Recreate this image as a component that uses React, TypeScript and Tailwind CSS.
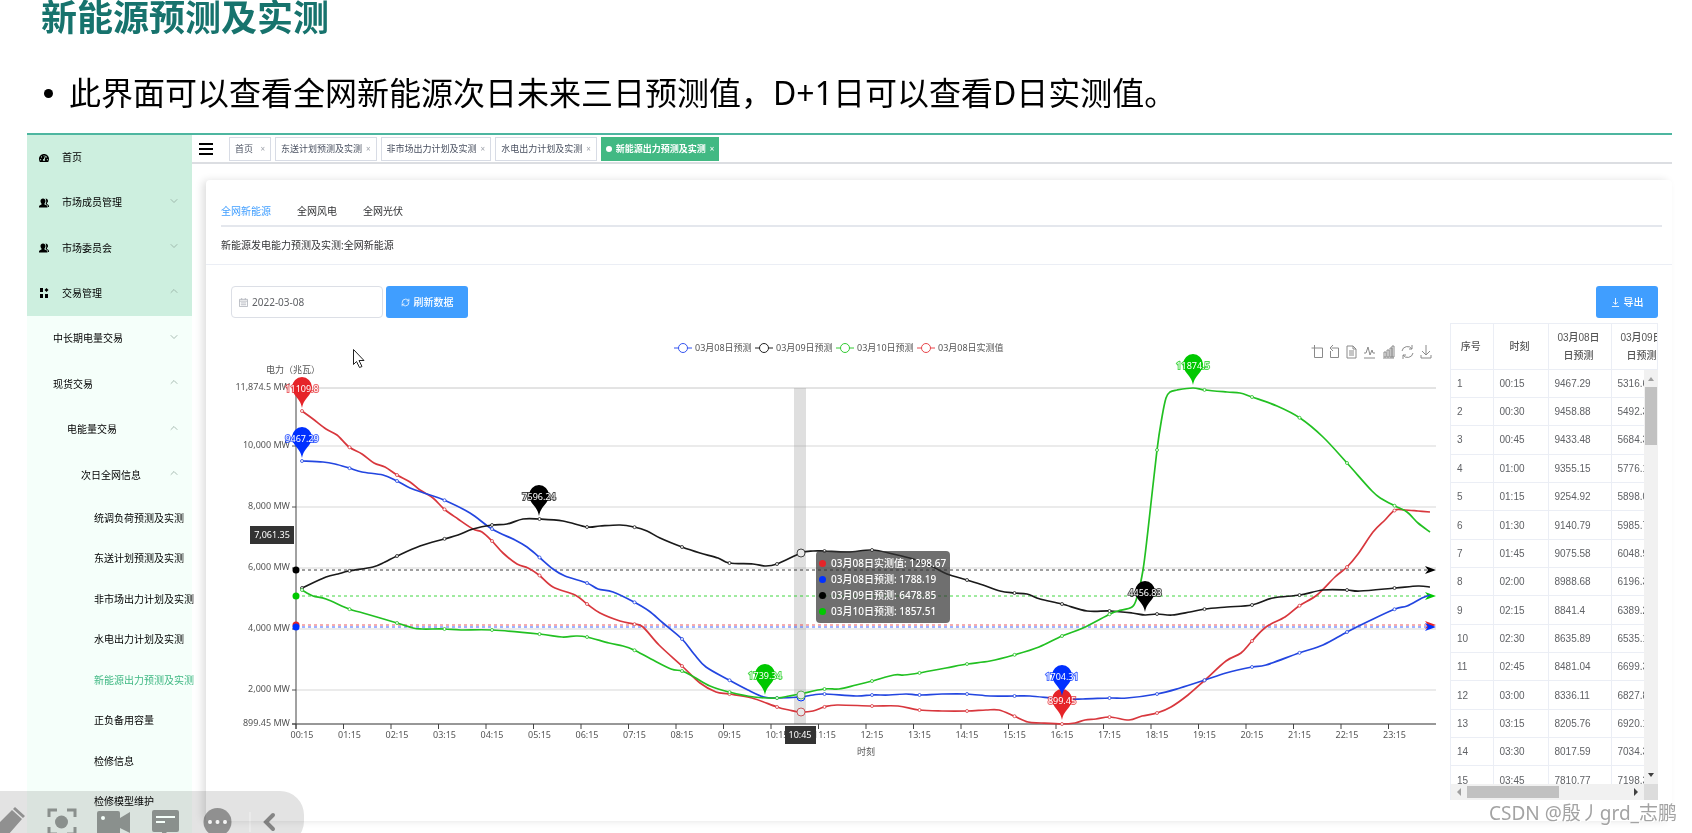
import { useState } from "react";
import { ChevronDown, ChevronUp, RefreshCw } from "lucide-react";
import { FaTachometerAlt } from "react-icons/fa";

type Point = [number, number];
type Series = { name: string; color: string; line: string; points: Point[] };
type Pin = { x: number; y: number; color: string; label: string };

const BLUE = "#0030ff";
const BLACK = "#000000";
const GREEN = "#00c800";
const RED = "#e62429";

const menuGroups = [
  { label: "首页", icon: "home", arrow: "" },
  { label: "市场成员管理", icon: "users", arrow: "down" },
  { label: "市场委员会", icon: "users", arrow: "down" },
  { label: "交易管理", icon: "grid", arrow: "up" },
];

const subGroups = [
  { label: "中长期电量交易", arrow: "down", pad: "pl-[26px]" },
  { label: "现货交易", arrow: "up", pad: "pl-[26px]" },
  { label: "电能量交易", arrow: "up", pad: "pl-10" },
  { label: "次日全网信息", arrow: "up", pad: "pl-[54px]" },
];

const leaves = [
  "统调负荷预测及实测",
  "东送计划预测及实测",
  "非市场出力计划及实测",
  "水电出力计划及实测",
  "新能源出力预测及实测",
  "正负备用容量",
  "检修信息",
  "检修模型维护",
];

const openTabs = ["首页", "东送计划预测及实测", "非市场出力计划及实测", "水电出力计划及实测"];

const rows = [
  ["00:15", "9467.29", "5316.63"],
  ["00:30", "9458.88", "5492.35"],
  ["00:45", "9433.48", "5684.32"],
  ["01:00", "9355.15", "5776.14"],
  ["01:15", "9254.92", "5898.05"],
  ["01:30", "9140.79", "5985.72"],
  ["01:45", "9075.58", "6048.93"],
  ["02:00", "8988.68", "6196.37"],
  ["02:15", "8841.4", "6389.24"],
  ["02:30", "8635.89", "6535.12"],
  ["02:45", "8481.04", "6699.31"],
  ["03:00", "8336.11", "6827.85"],
  ["03:15", "8205.76", "6920.16"],
  ["03:30", "8017.59", "7034.38"],
  ["03:45", "7810.77", "7198.33"],
];

// curve points in chart units, x 296-1436 and y 388-724
const series: Series[] = [
  {
    name: "03月08日实测值",
    color: RED,
    line: "#d8373d",
    points: [
      [302, 411], [313, 419], [326, 429], [337, 435], [349, 447], [362, 454], [374, 463], [385, 467],
      [397, 475], [410, 482], [420, 490], [433, 498], [444, 509], [458, 519], [473, 529], [482, 532],
      [492, 541], [503, 553], [517, 564], [528, 568], [539, 575], [553, 587], [575, 595], [587, 604],
      [600, 613], [620, 621], [634, 624], [643, 627], [659, 645], [682, 666], [700, 683], [716, 692],
      [729, 694], [752, 698], [777, 707], [789, 710], [800, 712], [813, 711], [824, 707], [837, 705],
      [872, 706], [898, 706], [919, 710], [942, 711], [967, 711], [986, 710], [999, 710], [1014, 716],
      [1028, 722], [1041, 723], [1062, 724], [1075, 723], [1085, 720], [1096, 719], [1110, 717],
      [1129, 720], [1142, 716], [1157, 713], [1171, 707], [1188, 695], [1205, 680], [1226, 661],
      [1241, 653], [1252, 641], [1266, 627], [1285, 617], [1299, 606], [1317, 595], [1335, 577],
      [1347, 567], [1358, 554], [1373, 532], [1385, 520], [1395, 510], [1405, 510], [1418, 511], [1430, 512],
    ],
  },
  {
    name: "03月08日预测",
    color: BLUE,
    line: "#2346e0",
    points: [
      [302, 461], [323, 462], [335, 464], [349, 468], [362, 472], [383, 475], [397, 481], [410, 488],
      [427, 494], [444, 500], [470, 513], [492, 529], [515, 540], [527, 547], [539, 557], [553, 569],
      [565, 576], [587, 583], [598, 589], [613, 592], [634, 602], [649, 611], [663, 623], [682, 639],
      [694, 654], [706, 667], [729, 680], [748, 690], [764, 697], [777, 698], [800, 697], [813, 695],
      [824, 694], [856, 696], [872, 695], [889, 695], [906, 694], [919, 695], [942, 694], [967, 694],
      [990, 696], [1014, 696], [1030, 696], [1062, 699], [1083, 699], [1110, 698], [1127, 698],
      [1157, 694], [1180, 688], [1205, 680], [1226, 673], [1252, 667], [1266, 665], [1299, 653],
      [1323, 645], [1347, 632], [1369, 621], [1395, 609], [1407, 606], [1422, 598], [1430, 595],
    ],
  },
  {
    name: "03月09日预测",
    color: BLACK,
    line: "#1a1a1a",
    points: [
      [302, 588], [326, 577], [338, 574], [349, 571], [373, 567], [385, 562], [397, 556], [420, 546],
      [444, 539], [458, 535], [473, 529], [492, 525], [507, 524], [523, 519], [539, 519], [563, 521],
      [587, 527], [600, 526], [620, 525], [634, 527], [647, 531], [660, 538], [682, 547], [700, 553],
      [718, 558], [729, 563], [753, 564], [765, 566], [777, 564], [801, 553], [813, 551], [824, 551],
      [848, 552], [872, 550], [893, 554], [913, 559], [933, 567], [947, 574], [967, 580], [983, 585],
      [1000, 591], [1014, 593], [1027, 594], [1040, 599], [1062, 604], [1087, 611], [1110, 611],
      [1132, 613], [1145, 615], [1157, 614], [1172, 615], [1190, 612], [1205, 609], [1227, 607],
      [1252, 605], [1273, 598], [1300, 595], [1323, 590], [1347, 590], [1360, 591], [1395, 588],
      [1418, 586], [1430, 587],
    ],
  },
  {
    name: "03月10日预测",
    color: GREEN,
    line: "#22c022",
    points: [
      [302, 590], [313, 596], [326, 599], [349, 609], [363, 613], [397, 623], [413, 628], [422, 629],
      [444, 629], [461, 630], [492, 630], [539, 634], [562, 637], [576, 636], [587, 637], [609, 643],
      [623, 646], [634, 650], [651, 659], [671, 669], [682, 671], [694, 677], [710, 686], [729, 692],
      [754, 697], [777, 698], [789, 696], [800, 694], [824, 689], [839, 689], [856, 685], [872, 681],
      [894, 675], [904, 675], [919, 673], [946, 668], [967, 664], [990, 661], [1014, 655], [1039, 647],
      [1062, 636], [1083, 628], [1110, 614], [1118, 611], [1132, 607], [1137, 597], [1143, 570],
      [1148, 530], [1157, 450], [1162, 417], [1166, 398], [1170, 392], [1177, 390], [1193, 388],
      [1205, 390], [1227, 392], [1240, 393], [1252, 397], [1277, 406], [1300, 418], [1323, 437],
      [1347, 463], [1372, 491], [1382, 499], [1395, 506], [1407, 512], [1418, 523], [1430, 532],
    ],
  },
];

const pins: Pin[] = [
  { x: 302, y: 408, color: RED, label: "11109.8" },
  { x: 302, y: 458, color: BLUE, label: "9467.29" },
  { x: 539, y: 516, color: BLACK, label: "7596.24" },
  { x: 1145, y: 612, color: BLACK, label: "4456.83" },
  { x: 765, y: 695, color: GREEN, label: "1739.34" },
  { x: 1193, y: 385, color: GREEN, label: "11874.5" },
  { x: 1062, y: 720, color: RED, label: "899.45" },
  { x: 1062, y: 696, color: BLUE, label: "1704.31" },
];

const yTicks = [
  { y: 388, label: "11,874.5 MW" },
  { y: 446, label: "10,000 MW" },
  { y: 507, label: "8,000 MW" },
  { y: 568, label: "6,000 MW" },
  { y: 629, label: "4,000 MW" },
  { y: 690, label: "2,000 MW" },
  { y: 724, label: "899.45 MW" },
];

const averages = [
  { y: 570, color: BLACK },
  { y: 596, color: GREEN },
  { y: 625, color: RED },
  { y: 627, color: BLUE },
];

const legend = [
  { x: 683, color: "#3555f0", label: "03月08日预测" },
  { x: 764, color: "#222222", label: "03月09日预测" },
  { x: 845, color: "#33cc33", label: "03月10日预测" },
  { x: 926, color: "#e8474c", label: "03月08日实测值" },
];

const tooltip = [
  { color: "bg-[#e62429]", text: "03月08日实测值: 1298.67" },
  { color: "bg-[#0030ff]", text: "03月08日预测: 1788.19" },
  { color: "bg-black", text: "03月09日预测: 6478.85" },
  { color: "bg-[#00c800]", text: "03月10日预测: 1857.51" },
];

const hours = Array.from({ length: 24 }, (_, i) => i);
const hourX = (h: number) => 302 + h * 47.5;

// Catmull-Rom through the points, written as bezier segments
const smooth = (p: Point[]) => {
  let d = `M${p[0][0]} ${p[0][1]}`;
  for (let i = 0; i < p.length - 1; i++) {
    const a = p[i - 1] || p[i];
    const b = p[i];
    const c = p[i + 1];
    const e = p[i + 2] || c;
    d += `C${b[0] + (c[0] - a[0]) / 6} ${b[1] + (c[1] - a[1]) / 6} ${c[0] - (e[0] - b[0]) / 6} ${
      c[1] - (e[1] - b[1]) / 6
    } ${c[0]} ${c[1]}`;
  }
  return d;
};

const valueAt = (p: Point[], x: number) => {
  const i = Math.max(1, p.findIndex((q) => q[0] >= x));
  const [x0, y0] = p[i - 1];
  const [x1, y1] = p[i];
  return y0 + ((y1 - y0) * (x - x0)) / (x1 - x0);
};

const MenuIcon = ({ name }: { name: string }) => {
  if (name === "home") return <FaTachometerAlt className="size-[10px]" />;
  if (name === "users")
    return (
      <svg viewBox="0 0 20 20" className="size-[10px]" fill="currentColor">
        <path d="M8 1c3 0 5 2 5 5 0 2-1 4-2 5v2l5 2c1 1 1 2 1 4H0c0-2 0-3 1-4l4-2v-2C4 10 3 8 3 6c0-3 2-5 5-5z" />
        <path d="M13 1c3 0 5 2 5 5 0 2-1 3-2 4v2l3 2c1 1 1 2 1 4h-2c0-3-1-4-5-6 2-2 2-8 0-11z" />
      </svg>
    );
  return (
    <svg viewBox="0 0 10 10" className="size-[10px]" fill="currentColor">
      <path d="M1 0h3v4H1zM7.500 0l2 2-2 2-2-2zM1 6h3v4H1zM6 6h3v4H6z" />
    </svg>
  );
};

const Arrow = ({ dir }: { dir: string }) => {
  if (!dir) return null;
  const Icon = dir === "up" ? ChevronUp : ChevronDown;
  return <Icon className="ml-auto mr-3 mb-1 size-3 text-[#8fa79b]" strokeWidth={1.5} />;
};

const Sidebar = () => (
  <nav className="w-[165px] shrink-0 bg-[#f5fffa] text-[10px] whitespace-nowrap text-black">
    <ul className="flex h-[181px] flex-col bg-[#cdefdf]">
      {menuGroups.map((item) => (
        <li key={item.label} className="flex flex-1">
          <button className="flex flex-1 items-center pl-3">
            <MenuIcon name={item.icon} />
            <span className="ml-[13px]">{item.label}</span>
            <Arrow dir={item.arrow} />
          </button>
        </li>
      ))}
    </ul>
    <ul className="flex h-[182px] flex-col">
      {subGroups.map((item) => (
        <li key={item.label} className="flex flex-1">
          <button className={`flex flex-1 items-center ${item.pad}`}>
            <span>{item.label}</span>
            <Arrow dir={item.arrow} />
          </button>
        </li>
      ))}
    </ul>
    <ul className="flex h-[324px] flex-col">
      {leaves.map((label) => (
        <li key={label} className="flex flex-1">
          <a
            href="#"
            className={`flex flex-1 items-center pl-[67px] ${
              label === "新能源出力预测及实测" ? "text-[#3fb883]" : ""
            }`}
          >
            {label}
          </a>
        </li>
      ))}
    </ul>
  </nav>
);

const TabsBar = () => (
  <div className="flex h-[29px] items-center gap-1 border-b-2 border-[#dcdee2] pl-[7px] text-[9px] whitespace-nowrap text-[#495060]">
    <button aria-label="菜单" className="mr-3 flex w-[14px] flex-col gap-[3px] py-1">
      <span className="h-[2px] bg-black" />
      <span className="h-[2px] bg-black" />
      <span className="h-[2px] bg-black" />
    </button>
    {openTabs.map((label) => (
      <button
        key={label}
        className="flex h-6 min-w-[42px] items-center justify-between gap-1 border border-[#d8dce5] bg-white px-[5px]"
      >
        {label}
        <span className="text-[8px] text-[#a0a4ac]">×</span>
      </button>
    ))}
    <button className="flex h-6 items-center gap-1 bg-[#42b983] px-[5px] font-bold text-white">
      <span className="size-[6px] rounded-full bg-white" />
      新能源出力预测及实测
      <span className="text-[8px] font-normal">×</span>
    </button>
  </div>
);

const Toolbox = () => (
  <g fill="none" stroke="#8a8a8a">
    <path d="M1314.500 345v12.500h8v-9.500h-11" />
    <path d="M1330.500 351v6.500h8v-9.500h-7M1333 345l-3 3 3 3" />
    <path d="M1347 346h6l3 3v9h-9zM1353 346v3h3M1349 351h5M1349 353h5M1349 355h5" />
    <path d="M1364 353h2l2-6 2 8 2-5 1 3h2M1364 358h11" />
    <path d="M1384 352h2v5h-2zM1387 350h2v7h-2zM1390 348h2v9h-2zM1392 346h2v11h-2zM1383 358h11" />
    <path d="M1402 351a5.500 5.500 0 0 1 10-2M1413 353a5.500 5.500 0 0 1-10 2M1412 345v4h-3M1403 359v-4h3" />
    <path d="M1426 345v9M1422 351l4 4 4-4M1421 355v3h10v-3" />
  </g>
);

const Chart = () => (
  <svg
    viewBox="206 318 1244 462"
    className="block h-auto w-full text-[9px]"
    fill="#555"
    role="img"
    aria-label="新能源预测及实测曲线"
  >
    {legend.map((item) => (
      <g key={item.label}>
        <path d={`M${item.x - 9} 348h18`} stroke={item.color} />
        <circle cx={item.x} cy={348} r={4.5} fill="#fff" stroke={item.color} />
        <text x={item.x + 12} y={351}>{item.label}</text>
      </g>
    ))}
    <Toolbox />

    <text x={293} y={373} textAnchor="middle">电力（兆瓦）</text>
    {yTicks.map((tick) => (
      <g key={tick.label}>
        <path
          d={`M296 ${tick.y}H1436`}
          stroke={tick.y === 388 ? "#c8c8c8" : "#ebebeb"}
          strokeWidth={tick.y === 388 ? 1 : 2}
        />
        <path d={`M292 ${tick.y}h4`} stroke="#555" />
        <text x={290} y={tick.y + 2} textAnchor="end">{tick.label}</text>
      </g>
    ))}
    <rect x={794} y={388} width={12} height={336} fill="#969696" opacity={0.3} />
    <path d="M296 388V729M292 724H1436" stroke="#444" fill="none" />
    {hours.map((h) => (
      <g key={h}>
        <path d={`M${296 + h * 47.5} 724v5`} stroke="#444" />
        <text x={hourX(h)} y={738} textAnchor="middle">
          {String(h).padStart(2, "0")}:15
        </text>
      </g>
    ))}
    <text x={866} y={755} textAnchor="middle">时刻</text>

    {averages.map((avg) => (
      <g key={avg.color} fill={avg.color}>
        <path d={`M296 ${avg.y}H1428`} stroke={avg.color} strokeDasharray="3 3" opacity={0.75} />
        <circle cx={296} cy={avg.y} r={3.5} />
        <path d={`M1436 ${avg.y}l-11-4 3 4-3 4z`} />
      </g>
    ))}

    {series.map((s) => (
      <g key={s.name} stroke={s.line}>
        <path d={smooth(s.points)} fill="none" strokeWidth={1.7} />
        {hours.map((h) => (
          <circle key={h} cx={hourX(h)} cy={valueAt(s.points, hourX(h))} r={1.5} fill="#fff" strokeWidth={0.8} />
        ))}
      </g>
    ))}
    <g fill="#e8e8e8">
      <circle cx={801} cy={553} r={4} stroke="#444" />
      <circle cx={801} cy={697} r={4} stroke={BLUE} />
      <circle cx={801} cy={695} r={4} stroke="#5cae5c" />
      <circle cx={801} cy={712} r={4} stroke="#c8555a" />
    </g>

    {pins.map((pin) => (
      <g key={pin.label} fill={pin.color}>
        <path
          d={`M${pin.x} ${pin.y}c-1-6-4-9-7.500-13.500a10 10.500 0 1 1 15 0c-3.500 4.500-6.500 7.500-7.500 13.500z`}
        />
        <text
          x={pin.x}
          y={pin.y - 16}
          textAnchor="middle"
          fill="#fff"
          stroke={pin.color}
          strokeWidth={2}
          strokeOpacity={0.7}
          paintOrder="stroke"
        >
          {pin.label}
        </text>
      </g>
    ))}

    <g fill="#fff">
      <rect x={250} y={526} width={44} height={18} fill="#333" />
      <text x={272} y={538} textAnchor="middle">7,061.35</text>
      <rect x={785} y={726} width={31} height={18} fill="#333" />
      <text x={800} y={738} textAnchor="middle">10:45</text>
    </g>

    <path d="M353.500 349.500v15l3-3 3 6 2.500-1-3-6h5z" fill="#fff" stroke="#222" />
  </svg>
);

const columns = (
  <colgroup>
    <col className="w-[42px]" />
    <col className="w-[55px]" />
    <col className="w-[63px]" />
    <col className="w-[63px]" />
  </colgroup>
);

const DataTable = () => (
  <div className="mt-[5px] w-[208px] shrink-0 border-t border-l border-[#ebeef5] font-['Liberation_Sans','Noto_Sans_CJK_SC',sans-serif] text-[10px] text-[#606266]">
    <div className="overflow-hidden border-r border-[#ebeef5]">
      <table className="h-[46px] w-[223px] table-fixed border-collapse text-[#555]">
        {columns}
        <thead>
          <tr className="leading-[18px]">
            {["序号", "时刻", "03月08日 日预测", "03月09日 日预测"].map((label) => (
              <th key={label} className="border-r border-b border-[#ebeef5] pr-[10px] pl-2 font-medium">
                {label}
              </th>
            ))}
          </tr>
        </thead>
      </table>
    </div>
    <div className="flex">
      <div className="h-[414px] flex-1 overflow-hidden">
        <table className="h-[425px] w-[223px] table-fixed border-collapse">
          {columns}
          <tbody>
            {rows.map((row, i) => (
              <tr key={row[0]}>
                <td className="border-r border-b border-[#ebeef5] pl-[6px]">{i + 1}</td>
                {row.map((cell) => (
                  <td key={cell} className="border-r border-b border-[#ebeef5] pl-[6px]">
                    {cell}
                  </td>
                ))}
              </tr>
            ))}
          </tbody>
        </table>
      </div>
      <div className="flex w-[14px] flex-col items-center bg-[#f1f1f1] px-px">
        <span className="flex h-[17px] items-center">
          <svg viewBox="0 0 6 4" className="w-[6px]" fill="#a0a0a0"><path d="M0 4l3-4 3 4z" /></svg>
        </span>
        <span className="h-[58px] w-full bg-[#c1c1c1]" />
        <span className="mt-auto flex h-[18px] items-center">
          <svg viewBox="0 0 6 4" className="w-[6px]" fill="#404040"><path d="M0 0l3 4 3-4z" /></svg>
        </span>
      </div>
    </div>
    <div className="flex h-4">
      <div className="flex flex-1 items-center bg-[#f1f1f1] py-[2px]">
        <span className="flex w-4 justify-center">
          <svg viewBox="0 0 4 8" className="h-2" fill="#a0a0a0"><path d="M4 0L0 4l4 4z" /></svg>
        </span>
        <span className="h-full w-[92px] bg-[#c1c1c1]" />
        <span className="ml-auto flex w-4 justify-center">
          <svg viewBox="0 0 4 8" className="h-2" fill="#404040"><path d="M0 0l4 4-4 4z" /></svg>
        </span>
      </div>
      <span className="w-[14px] bg-[#dcdcdc]" />
    </div>
  </div>
);

const Presenter = () => (
  <div className="absolute -bottom-3 left-0 h-[54px] w-[304px] rounded-r-3xl bg-[#e3e3e3] mix-blend-multiply">
    <svg viewBox="0 791 304 42" className="h-[42px] w-[304px]" fill="#909090">
      <path d="M12 810l10 9-14 16H-4v-9zM13 809l2-2 10 9-2 2z" />
      <path d="M49 817v-7h8M67 810h8v7M49 827v7h8M75 827v7h-8" fill="none" stroke="#909090" strokeWidth={3} />
      <circle cx={61.5} cy={822} r={6.5} />
      <path d="M99 811h19q2 0 2 2v5l10-6v21l-10-5v6H97v-21q0-2 2-2z" />
      <circle cx={103} cy={818} r={2} fill="#fff" />
      <path d="M154 810h23q2 0 2 2v18q0 2-2 2h-10l-5 5v-5h-8q-2 0-2-2v-18q0-2 2-2z" />
      <path d="M156 817h19M156 822h9" stroke="#fff" strokeWidth={2} />
      <circle cx={217.500} cy={822} r={14} />
      <g fill="#fff">
        <circle cx={210} cy={822} r={2} />
        <circle cx={217.500} cy={822} r={2} />
        <circle cx={225} cy={822} r={2} />
      </g>
      <path d="M250 812v20" stroke="#f2f2f2" />
      <path d="M273 815l-7 7 7 7" fill="none" stroke="#858585" strokeWidth={4} strokeLinecap="round" />
    </svg>
  </div>
);

const App = () => {
  const [date, setDate] = useState("2022-03-08");

  return (
    <div className="relative flex h-screen flex-col overflow-hidden bg-white font-['Noto_Sans','Noto_Sans_CJK_SC',sans-serif]">
      <h1 className="pl-[41px] text-4xl leading-9 font-bold text-[#17736d]">新能源预测及实测</h1>
      <div className="mt-[37px] flex items-center pl-11 text-[32px] leading-10 text-black">
        <span className="mr-4 size-[9px] rounded-full bg-black" />
        <p>此界面可以查看全网新能源次日未来三日预测值，D+1日可以查看D日实测值。</p>
      </div>

      <div className="mt-5 mr-5 ml-[27px] flex flex-1 border-t-2 border-[#4db6a0]">
        <Sidebar />
        <main className="min-w-0 flex-1">
          <TabsBar />
          <section className="mt-4 ml-[14px] rounded-t bg-white pb-[21px] shadow-[-4px_0_8px_-1px_rgba(0,0,0,0.14)]">
            <div className="mr-[10px] ml-[15px] flex gap-[26px] border-b-2 border-[#e4e7ed] pt-[21px] pb-1 text-[10px] leading-5 text-[#303133]">
              <button className="text-[#409eff]">全网新能源</button>
              <button>全网风电</button>
              <button>全网光伏</button>
            </div>
            <h2 className="h-[38px] border-b border-[#ebeef5] pl-[15px] text-[10px] leading-9 text-[#303133]">
              新能源发电能力预测及实测:全网新能源
            </h2>
            <div className="mt-[21px] flex h-8 items-center pr-[14px] pl-[25px] text-[10px]">
              <label className="flex h-8 w-[152px] items-center gap-1 rounded border border-[#dcdfe6] pl-[7px] text-[#606266]">
                <svg viewBox="0 0 10 10" className="size-[9px]" fill="none" stroke="#b4b8c0">
                  <path d="M.5 1.500h9v8h-9zM.5 3.500h9M2 5.500h6M2 7.500h6M3 0v2M7 0v2" />
                </svg>
                <input
                  aria-label="日期"
                  className="w-28 outline-none"
                  value={date}
                  onChange={(e) => setDate(e.target.value)}
                />
              </label>
              <button className="ml-[3px] flex h-8 w-[82px] items-center justify-center gap-1 rounded-[3px] bg-[#409eff] font-medium text-white">
                <RefreshCw className="size-[9px]" />
                刷新数据
              </button>
              <button className="ml-auto flex h-8 w-[62px] items-center justify-center gap-1 rounded-[3px] bg-[#409eff] font-medium text-white">
                <svg viewBox="0 0 10 10" className="size-[9px]" fill="none" stroke="currentColor">
                  <path d="M5 0v7M2.500 4.500L5 7l2.500-2.500M1 9.500h8" />
                </svg>
                导出
              </button>
            </div>
            <div className="flex pr-[14px]">
              <div className="relative min-w-0 flex-1">
                <Chart />
                <ul className="absolute top-[233px] left-[610px] rounded bg-[#323232]/70 py-1 pr-1 pl-[3px] text-[10px] leading-4 font-medium whitespace-nowrap text-white">
                  {tooltip.map((item) => (
                    <li key={item.text} className="flex items-center gap-[5px]">
                      <span className={`size-[7px] rounded-full ${item.color}`} />
                      {item.text}
                    </li>
                  ))}
                </ul>
              </div>
              <DataTable />
            </div>
          </section>
        </main>
      </div>

      <Presenter />
      <div className="absolute right-[15px] bottom-1 text-[19px] leading-8 text-[#a3a3a3] [text-shadow:1px_1px_0_#fff]">
        CSDN @殷丿grd_志鹏
      </div>
    </div>
  );
};

export default App;
